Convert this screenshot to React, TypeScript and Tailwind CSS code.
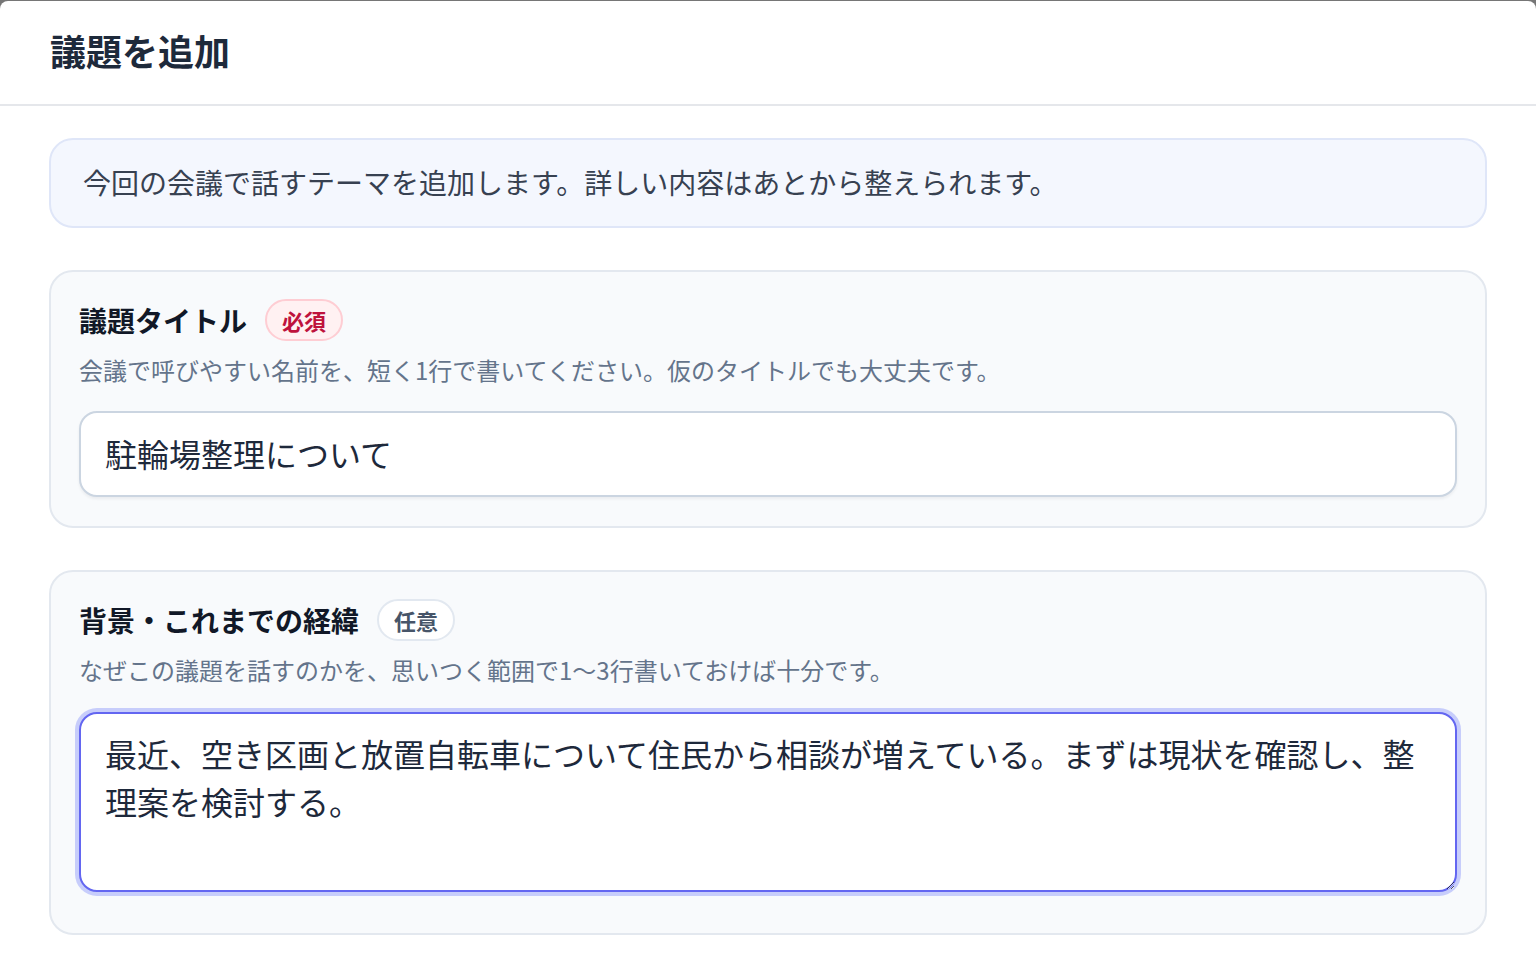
import { useState } from "react";

const font = { fontFamily: '"Noto Sans CJK JP", "Noto Sans", sans-serif' };

const cardClass =
  "rounded-[24px] border-2 border-[#e3e8ef] bg-[#f8fafc] px-[28px] pt-[27px]";
const labelClass = "text-[28px] font-bold leading-[42px] text-[#111827]";
const helpClass = "mt-[11px] text-[24px] leading-[36px] text-[#64748b]";

function Badge({ kind }: { kind: "required" | "optional" }) {
  if (kind === "required") {
    return (
      <span className="flex h-[42px] items-center rounded-full border-2 border-[#fecdd3] bg-[#fff1f2] px-[15px] text-[22px] font-bold text-[#be123c]">
        必須
      </span>
    );
  }
  return (
    <span className="flex h-[42px] items-center rounded-full border-2 border-[#e2e8f0] bg-white px-[15px] text-[22px] font-bold text-[#475569]">
      任意
    </span>
  );
}

export default function App() {
  const [title, setTitle] = useState("駐輪場整理について");
  const [background, setBackground] = useState(
    "最近、空き区画と放置自転車について住民から相談が増えている。まずは現状を確認し、整理案を検討する。"
  );

  return (
    <div className="min-h-screen bg-[#767676] pt-px" style={font}>
      <div className="min-h-[971px] rounded-t-[8px] bg-white">
        <div className="flex h-[105px] items-center border-b-2 border-[#e5e7eb] px-[50px] pb-[5px]">
          <h1 className="text-[36px] font-bold text-[#1e2a3b]">議題を追加</h1>
        </div>

        <div className="flex flex-col gap-[42px] px-[49px] pt-[32px]">
          <div className="flex h-[90px] items-center rounded-[24px] border-2 border-[#dfe6f8] bg-[#f4f7fe] px-[32px] pb-[2px] text-[28px] text-[#374151]">
            今回の会議で話すテーマを追加します。詳しい内容はあとから整えられます。
          </div>

          {/* 議題タイトル */}
          <div className={`${cardClass} pb-[29px]`}>
            <div className="flex items-center gap-[18px]">
              <label className={labelClass}>議題タイトル</label>
              <Badge kind="required" />
            </div>
            <p className={helpClass}>
              会議で呼びやすい名前を、短く1行で書いてください。仮のタイトルでも大丈夫です。
            </p>
            <input
              value={title}
              onChange={(e) => setTitle(e.target.value)}
              className="mt-[23px] block h-[86px] w-full rounded-[18px] border-2 border-[#cbd5e1] bg-white px-[24px] pb-[3px] text-[32px] text-[#1e293b] shadow-[0_2px_3px_rgba(15,23,42,0.06)] outline-none"
            />
          </div>

          {/* 背景 */}
          <div className={`${cardClass} pb-[41px]`}>
            <div className="flex items-center gap-[18px]">
              <label className={labelClass}>背景・これまでの経緯</label>
              <Badge kind="optional" />
            </div>
            <p className={helpClass}>
              なぜこの議題を話すのかを、思いつく範囲で1〜3行書いておけば十分です。
            </p>
            <textarea
              value={background}
              onChange={(e) => setBackground(e.target.value)}
              className="mt-[24px] block h-[180px] w-full rounded-[18px] border-2 border-[#6366f1] bg-white px-[24px] pt-[15px] pb-[17px] text-[32px] leading-[48px] text-[#1e293b] outline-none ring-4 ring-[#c7cdfb]"
            />
          </div>
        </div>
      </div>
    </div>
  );
}
